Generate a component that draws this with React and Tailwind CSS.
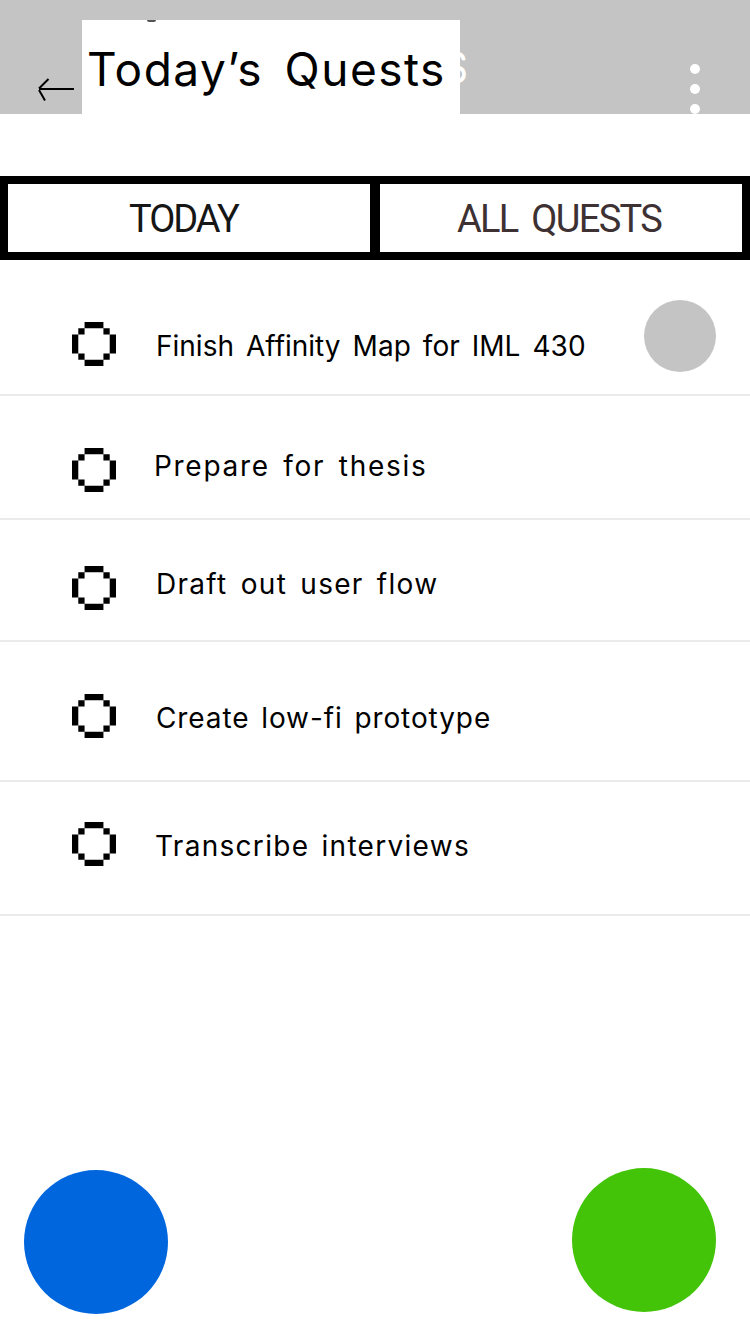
const quests = [
  {
    title: 'Finish Affinity Map for IML 430',
    row: 'h-[136px] pt-[62px]',
    text: 'ml-[40px] mt-[5px] tracking-[0px] [word-spacing:4.2px]',
    avatar: true,
  },
  {
    title: 'Prepare for thesis',
    row: 'h-[124px] pt-[52px]',
    text: 'ml-[38px] -mt-px tracking-[1.7px] [word-spacing:4px]',
  },
  {
    title: 'Draft out user flow',
    row: 'h-[122px] pt-[46px]',
    text: 'ml-[40px] -mt-px tracking-[1.3px] [word-spacing:4px]',
  },
  {
    title: 'Create low-fi prototype',
    row: 'h-[140px] pt-[52px]',
    text: 'ml-[40px] mt-[5px] tracking-[0.9px] [word-spacing:3px]',
  },
  {
    title: 'Transcribe interviews',
    row: 'h-[134px] pt-[40px]',
    text: 'ml-[39px] mt-[5px] tracking-[1.3px] [word-spacing:3px]',
  },
];

function PixelRing() {
  return (
    <svg className="size-11 shrink-0" viewBox="0 0 7 7" fill="#000">
      <path d="M2 0h3v1H2zM1 1h1v1H1zM5 1h1v1H5zM0 2h1v3H0zM6 2h1v3H6zM1 5h1v1H1zM5 5h1v1H5zM2 6h3v1H2z" />
    </svg>
  );
}

function BackArrow() {
  return (
    <svg className="h-[24px] w-[38px]" viewBox="0 0 38 24" fill="none" stroke="#000" strokeWidth="2">
      <path d="M3 12H38M3 11.5L12.5 2M3 13L9 23.5" />
    </svg>
  );
}

function Header() {
  return (
    <header className="relative flex h-[114px] justify-between overflow-hidden bg-[#c4c4c4] pr-[50px]">
      <span className="absolute left-[441px] top-[42px] origin-right scale-x-80 font-['Inter'] text-[41px] leading-[50px] font-medium text-white">
        S
      </span>
      <div className="flex">
        <button type="button" aria-label="Back" className="mt-[77px] ml-[36px] h-6 w-[46px]">
          <BackArrow />
        </button>
        <div className="relative mt-[20px] h-[94px] w-[378px] bg-white">
          <span className="absolute left-[65px] top-0 h-[2px] w-[9px] rounded-b-[2px] bg-[#555]" />
          <h1 className="ml-[5px] mt-[21px] w-fit font-['Inter'] text-[46px] leading-[56px] tracking-[1.5px] [word-spacing:7px] whitespace-nowrap text-black">
            Today’s Quests
          </h1>
        </div>
      </div>
      <button type="button" aria-label="More" className="mt-[64px] flex flex-col gap-[10px]">
        <span className="size-[10px] rounded-full bg-white" />
        <span className="size-[10px] rounded-full bg-white" />
        <span className="size-[10px] rounded-full bg-white" />
      </button>
    </header>
  );
}

function Tabs() {
  return (
    <nav className="mt-[62px] grid h-[84px] grid-cols-2 gap-[10px] bg-black p-[8px] font-['Roboto'] text-[38px] leading-[66px] whitespace-nowrap">
      <button type="button" className="bg-white pl-[121px] pt-[2px] text-left tracking-[-2px] text-[#161616]">
        TODAY
      </button>
      <button
        type="button"
        className="bg-white pl-[77px] pt-[2px] text-left tracking-[-1.7px] [word-spacing:6px] text-[#3d3133]"
      >
        ALL QUESTS
      </button>
    </nav>
  );
}

export default function App() {
  return (
    <div className="flex h-[1334px] w-[750px] flex-col overflow-hidden bg-white">
      <Header />
      <Tabs />
      <ul>
        {quests.map((q) => (
          <li key={q.title} className={`relative flex items-start border-b-2 border-[#ebebeb] pl-[72px] ${q.row}`}>
            <PixelRing />
            <span className={`font-['Inter'] text-[28px] leading-[38px] whitespace-nowrap text-black ${q.text}`}>
              {q.title}
            </span>
            {q.avatar && <span className="absolute left-[644px] top-[40px] size-[72px] rounded-full bg-[#c4c4c4]" />}
          </li>
        ))}
      </ul>
      <footer className="mt-auto flex items-end justify-between pr-[34px] pb-[20px] pl-[24px]">
        <button type="button" aria-label="Quests" className="size-36 rounded-full bg-[#0066de]" />
        <button type="button" aria-label="Add quest" className="mb-[2px] size-36 rounded-full bg-[#43c408]" />
      </footer>
    </div>
  );
}
